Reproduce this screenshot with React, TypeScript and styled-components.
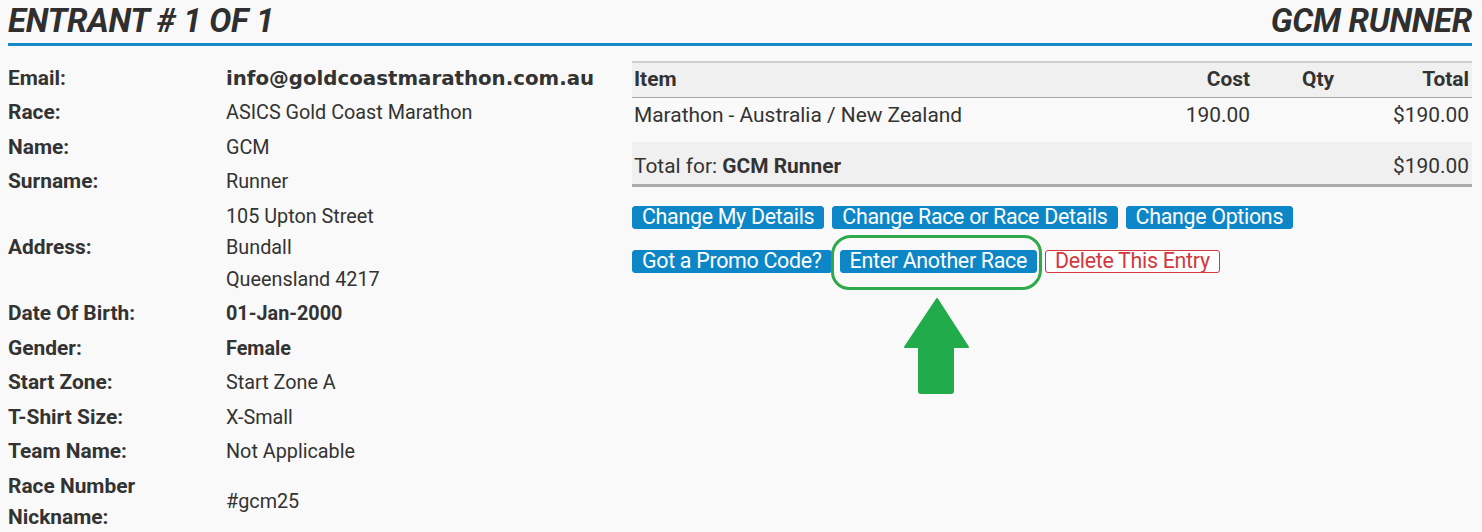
import React from "react";
import styled, { createGlobalStyle } from "styled-components";

const Global = createGlobalStyle`
  html, body { margin: 0; padding: 0; background: #f9f9f9; }
  body { font-family: Roboto, "Liberation Sans", Arial, sans-serif; color: #333; }
  * { box-sizing: border-box; }
`;

const Page = styled.div`
  padding: 0 10px 0 8px;
  width: 1482px;
`;

const Header = styled.header`
  display: flex;
  justify-content: space-between;
  align-items: flex-end;
  height: 46px;
  border-bottom: 3px solid #1689c6;
  padding-bottom: 4px;
`;

const Title = styled.h1`
  margin: 0;
  font-size: 33px;
  line-height: 36px;
  font-weight: 700;
  font-style: italic;
  color: #2f2f2f;
  letter-spacing: -0.3px;
`;

const Columns = styled.div`
  display: grid;
  grid-template-columns: 608px 1fr;
  gap: 16px;
  padding-top: 15px;
`;

const InfoTable = styled.div`
  display: grid;
  grid-template-columns: 218px 1fr;
  font-size: 19.8px;
`;

const Label = styled.div`
  font-weight: 700;
  font-size: 20.9px;
  padding: 1.5px 10px 1.5px 0;
  line-height: 31.5px;
  display: flex;
  align-items: center;
`;

const Value = styled.div<{ $bold?: boolean; $mono?: boolean }>`
  padding: 1.5px 0;
  line-height: 31.5px;
  font-weight: ${(p) => (p.$bold ? 700 : 400)};
  font-family: ${(p) => (p.$mono ? '"DejaVu Sans", Verdana, sans-serif' : "inherit")};
  font-size: 19.8px;
  display: flex;
  flex-direction: column;
  justify-content: center;
  white-space: nowrap;
`;

const Right = styled.div``;

const Cart = styled.table`
  width: 100%;
  border-collapse: collapse;
  font-size: 20.9px;
`;

const HeadRow = styled.tr`
  background: #f0f0f0;
  border-top: 2px solid #cfcfcf;
  border-bottom: 1px solid #a9a9a9;
`;

const Th = styled.th<{ $align?: string; $w?: string }>`
  text-align: ${(p) => p.$align || "left"};
  font-weight: 700;
  padding: 4px 3px 5px 2px;
  height: 35px;
  width: ${(p) => p.$w || "auto"};
`;

const Td = styled.td<{ $align?: string }>`
  text-align: ${(p) => p.$align || "left"};
  padding: 1px 3px 2px 2px;
  height: 36px;
`;

const SpacerRow = styled.tr`
  height: 9px;
`;

const TotalRow = styled.tr`
  background: #f0f0f0;
  border-bottom: 3px solid #aaa;
  td { height: 43px; padding-top: 7px; padding-bottom: 0; }
`;

const ButtonRows = styled.div`
  display: flex;
  flex-direction: column;
  gap: 21px;
  margin-top: 19px;
`;

const ButtonRow = styled.div`
  display: flex;
  gap: 8px;
  align-items: center;
`;

const Btn = styled.button<{ $danger?: boolean }>`
  font-family: Roboto, "Liberation Sans", Arial, sans-serif;
  font-size: 21.4px;
  line-height: 20px;
  height: 23px;
  padding: 0 9px;
  border-radius: 3px;
  letter-spacing: -0.3px;
  cursor: pointer;
  background: ${(p) => (p.$danger ? "#fff" : "#0d86c8")};
  color: ${(p) => (p.$danger ? "#d2383e" : "#fff")};
  border: 1px solid ${(p) => (p.$danger ? "#d2383e" : "#0d86c8")};
`;

const Highlight = styled.div`
  position: relative;
  display: inline-flex;
  &::after {
    content: "";
    position: absolute;
    left: -9px;
    right: -5px;
    top: -15px;
    bottom: -17px;
    border: 3px solid #2eaa4c;
    border-radius: 20px 18px 20px 18px;
    pointer-events: none;
  }
`;

const Arrow = styled.svg`
  position: absolute;
  left: 64px;
  top: 48px;
`;

export default function App() {
  return (
    <Page>
      <Global />
      <Header>
        <Title>ENTRANT # 1 OF 1</Title>
        <Title>GCM RUNNER</Title>
      </Header>
      <Columns>
        <InfoTable>
          <Label>Email:</Label>
          <Value $bold $mono>info@goldcoastmarathon.com.au</Value>
          <Label>Race:</Label>
          <Value>ASICS Gold Coast Marathon</Value>
          <Label>Name:</Label>
          <Value>GCM</Value>
          <Label>Surname:</Label>
          <Value>Runner</Value>
          <Label>Address:</Label>
          <Value>
            <span>105 Upton Street</span>
            <span>Bundall</span>
            <span>Queensland 4217</span>
          </Value>
          <Label>Date Of Birth:</Label>
          <Value $bold>01-Jan-2000</Value>
          <Label>Gender:</Label>
          <Value $bold>Female</Value>
          <Label>Start Zone:</Label>
          <Value>Start Zone A</Value>
          <Label>T-Shirt Size:</Label>
          <Value>X-Small</Value>
          <Label>Team Name:</Label>
          <Value>Not Applicable</Value>
          <Label>Race Number Nickname:</Label>
          <Value>#gcm25</Value>
        </InfoTable>
        <Right>
          <Cart>
            <thead>
              <HeadRow>
                <Th>Item</Th>
                <Th $align="right" $w="160px">Cost</Th>
                <Th $align="right" $w="84px">Qty</Th>
                <Th $align="right" $w="135px">Total</Th>
              </HeadRow>
            </thead>
            <tbody>
              <tr>
                <Td>Marathon - Australia / New Zealand</Td>
                <Td $align="right">190.00</Td>
                <Td $align="right"></Td>
                <Td $align="right">$190.00</Td>
              </tr>
              <SpacerRow />
              <TotalRow>
                <Td colSpan={3}>
                  Total for: <b>GCM Runner</b>
                </Td>
                <Td $align="right">$190.00</Td>
              </TotalRow>
            </tbody>
          </Cart>
          <ButtonRows>
            <ButtonRow>
              <Btn>Change My Details</Btn>
              <Btn>Change Race or Race Details</Btn>
              <Btn>Change Options</Btn>
            </ButtonRow>
            <ButtonRow>
              <Btn>Got a Promo Code?</Btn>
              <Highlight>
                <Btn>Enter Another Race</Btn>
                <Arrow width="66" height="96" viewBox="0 0 66 96">
                  <path
                    d="M33 1 L64 49 L49 49 L49 93 Q49 95 47 95 L17 95 Q15 95 15 93 L15 49 L1 49 Z"
                    fill="#22ab4b"
                    stroke="#22ab4b"
                    strokeLinejoin="round"
                    strokeWidth="2"
                  />
                </Arrow>
              </Highlight>
              <Btn $danger>Delete This Entry</Btn>
            </ButtonRow>
          </ButtonRows>
        </Right>
      </Columns>
    </Page>
  );
}
